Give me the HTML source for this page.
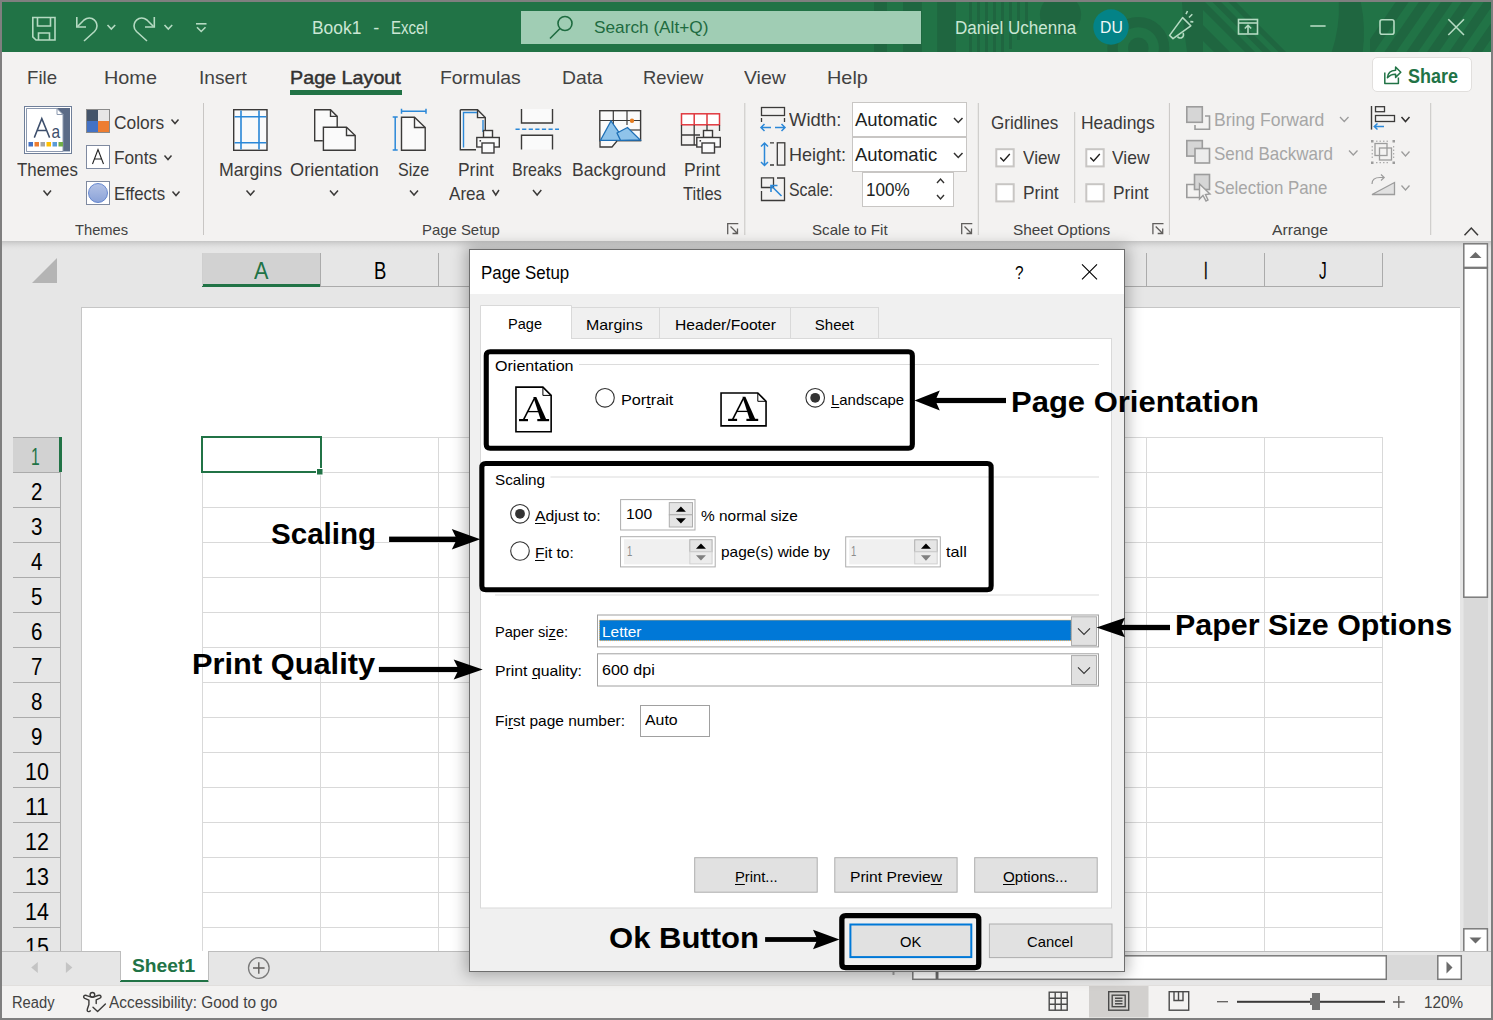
<!DOCTYPE html>
<html><head><meta charset="utf-8"><title>Excel Page Setup</title>
<style>
html,body{margin:0;padding:0;}
body{width:1493px;height:1020px;position:relative;overflow:hidden;background:#7f7f7f;font-family:"Liberation Sans",sans-serif;}
.r{position:absolute;}
.t{position:absolute;white-space:nowrap;line-height:1;transform-origin:0 0;font-family:"Liberation Sans",sans-serif;}
u{text-decoration-thickness:1px;text-underline-offset:2px;}
</style></head><body>
<div class="r" style="left:2px;top:2px;width:1489px;height:50.7px;background:#217346;"></div>
<svg class="r" style="left:0;top:0" width="1493" height="52" viewBox="0 0 1493 52">
<defs><clipPath id="tbc"><rect x="2" y="2" width="1489" height="50"/></clipPath><clipPath id="tbc2"><rect x="1203" y="2" width="120" height="50"/></clipPath><clipPath id="tbc3"><rect x="1370" y="2" width="121" height="50"/></clipPath></defs>
<g clip-path="url(#tbc)" fill="#1f6640">
<rect x="874" y="2" width="13" height="50"/><rect x="903" y="2" width="18.8" height="50"/><rect x="937.2" y="2" width="18.8" height="50"/>
<rect x="969" y="2" width="3" height="50"/><rect x="977" y="2" width="3" height="50"/><rect x="985" y="2" width="3" height="50"/><rect x="993" y="2" width="3" height="50"/><rect x="1001" y="2" width="3" height="50"/><rect x="1009" y="2" width="3" height="47"/><rect x="1017" y="2" width="3" height="38"/><rect x="1025" y="2" width="3" height="24"/>
<circle cx="1060.5" cy="14.7" r="20.6"/>
<path d="M1138.3 47.9 m-31 0 a31 31 0 1 0 62 0 a31 31 0 1 0 -62 0 Z M1138.3 47.9 m-20.6 0 a20.6 20.6 0 1 1 41.2 0 a20.6 20.6 0 1 1 -41.2 0 Z" fill-rule="evenodd"/>
<circle cx="1138.3" cy="47.9" r="10.3"/>
<path d="M1182 2 L1203 2 L1203 52 L1187 52 Q1183 27 1182 2 Z"/>
<g clip-path="url(#tbc2)"><path d="M1164 2 L1180 2 L1230 52 L1214 52 Z"/><path d="M1195 2 L1205 2 L1255 52 L1245 52 Z"/><path d="M1212.5 2 L1221 2 L1271 52 L1262.5 52 Z"/><path d="M1228.5 2 L1236 2 L1286 52 L1278.5 52 Z"/></g>
<path d="M1338.8 2 L1360.8 2 Q1366 27 1362.7 52 L1331.7 52 Q1340 27 1338.8 2 Z"/>
<g clip-path="url(#tbc3)"><path d="M1395.7199999999998 2 L1408.62 2 L1374.12 52 L1361.2199999999998 52 Z"/><path d="M1418.9199999999998 2 L1430.62 2 L1396.12 52 L1384.42 52 Z"/><path d="M1440.9199999999998 2 L1452.52 2 L1418.02 52 L1406.42 52 Z"/><path d="M1461.62 2 L1473.2199999999998 2 L1438.7199999999998 52 L1427.12 52 Z"/><path d="M1483.62 2 L1495.02 2 L1460.52 52 L1449.12 52 Z"/><path d="M1505.62 2 L1516.62 2 L1482.12 52 L1471.12 52 Z"/></g>
</g>
<g fill="none" stroke="#b5dac2" stroke-width="1.6">
<!-- save -->
<path d="M32.8 17.5 H55 V40 H36 L32.8 36.8 Z"/><path d="M37.5 17.5 V26 H50.5 V17.5"/><path d="M38.5 40 V33 H49.5 V40"/>
<!-- undo -->
<path d="M76.8 17 V27 H86"/><path d="M77.5 26.5 L84 20 Q88 17 92 18.5 Q97 21 97 26 Q97 29 94.5 31.5 L84 41"/>
<path d="M107.5 25 L111.3 29 L115.2 25"/>
<!-- redo -->
<path d="M154.3 17 V27 H145"/><path d="M153.5 26.5 L147 20 Q143 17 139 18.5 Q134 21 134 26 Q134 29 136.5 31.5 L147 41"/>
<path d="M164.5 25 L168.3 29 L172.2 25"/>
<!-- customize -->
<path d="M196 23.8 H206.5"/><path d="M197 27.3 L201.2 31.5 L205.5 27.3"/>
<!-- megaphone -->
<path d="M1169.6 35.4 L1182.6 17.6 L1190.8 25.8 L1173 38.6 Z" stroke-linejoin="round"/><path d="M1177.5 36.5 A3.2 3.2 0 1 0 1183 33"/><path d="M1186 14.2 L1187.5 11 M1189 17.5 L1192.3 14.3 M1190.3 21.6 L1193.3 21.9"/>
<!-- ribbon display -->
<rect x="1238.5" y="19.5" width="19" height="14.5"/><path d="M1238.5 23 H1257.5"/><path d="M1248 33.5 V25.5 M1244.8 28.5 L1248 25.3 L1251.2 28.5"/>
<!-- min max close -->
<path d="M1310.3 26 H1325.6"/>
<rect x="1380" y="19.8" width="14" height="14.5" rx="2"/>
<path d="M1448.3 19.3 L1464 35 M1464 19.3 L1448.3 35"/>
</g>
</svg>
<div class="r" style="left:521px;top:11px;width:400px;height:33px;background:#a0cdb4;"></div>
<svg class="r" style="left:540px;top:12px" width="40" height="32"><g fill="none" stroke="#1e6b40" stroke-width="1.6"><circle cx="25" cy="11.5" r="7"/><path d="M20 16.5 L10 26.5"/></g></svg>
<div class="t" style="left:594.00px;top:19.35px;font-size:17px;color:#1e6b40;transform:scaleX(1.0135);">Search (Alt+Q)</div>
<div class="t" style="left:312.10px;top:18.50px;font-size:18px;color:#cbe6d4;transform:scaleX(0.9661);">Book1</div>
<div class="t" style="left:373.30px;top:18.50px;font-size:18px;color:#cbe6d4;">-</div>
<div class="t" style="left:390.80px;top:18.50px;font-size:18px;color:#cbe6d4;transform:scaleX(0.8362);">Excel</div>
<div class="t" style="left:955.20px;top:18.50px;font-size:18px;color:#cbe6d4;transform:scaleX(0.9465);">Daniel Uchenna</div>
<svg class="r" style="left:1090px;top:8px" width="42" height="40"><circle cx="21" cy="19" r="17.7" fill="#038387"/></svg>
<div class="t" style="left:1099.80px;top:18.85px;font-size:17px;color:#f0f8f8;transform:scaleX(0.9281);">DU</div>
<div class="r" style="left:2px;top:52px;width:1489px;height:189px;background:#f3f2f1;"></div>
<div class="t" style="left:26.80px;top:67.55px;font-size:19px;color:#424242;transform:scaleX(0.9807);">File</div>
<div class="t" style="left:103.80px;top:67.55px;font-size:19px;color:#424242;transform:scaleX(1.0447);">Home</div>
<div class="t" style="left:199.30px;top:67.55px;font-size:19px;color:#424242;transform:scaleX(1.0063);">Insert</div>
<div class="t" style="left:440.30px;top:67.55px;font-size:19px;color:#424242;transform:scaleX(1.0198);">Formulas</div>
<div class="t" style="left:561.60px;top:67.55px;font-size:19px;color:#424242;transform:scaleX(1.0178);">Data</div>
<div class="t" style="left:642.60px;top:67.55px;font-size:19px;color:#424242;transform:scaleX(0.9676);">Review</div>
<div class="t" style="left:744.30px;top:67.55px;font-size:19px;color:#424242;transform:scaleX(1.0233);">View</div>
<div class="t" style="left:827.30px;top:67.55px;font-size:19px;color:#424242;transform:scaleX(1.0449);">Help</div>
<div class="t" style="left:290.10px;top:67.55px;font-size:19px;color:#323130;transform:scaleX(1.0386);-webkit-text-stroke:0.45px #323130;">Page Layout</div>
<div class="r" style="left:290px;top:90px;width:112px;height:4.5px;background:#217346;"></div>
<div class="r" style="left:1372.4px;top:57.3px;width:100px;height:35px;background:#ffffff;border:1px solid #e1dfdd;border-radius:5px;box-sizing:border-box;"></div>
<svg class="r" style="left:0;top:0" width="1493" height="100"><g fill="none" stroke="#217346" stroke-width="1.5" stroke-linejoin="round"><path d="M1384.8 72.4 V83.4 H1398.4 V77.6"/><path d="M1387.4 77.8 Q1388 70.6 1395.6 70.3 V67 L1400.8 72.2 L1395.6 77.4 V74.2 Q1390.6 74 1387.4 77.8 Z"/></g></svg>
<div class="t" style="left:1408.20px;top:65.25px;font-size:21px;color:#217346;font-weight:bold;transform:scaleX(0.8547);">Share</div>
<svg class="r" style="left:0;top:0" width="1493" height="245"><rect x="203.0" y="103" width="1" height="132" fill="#c8c6c4"/><rect x="744.3" y="103" width="1" height="132" fill="#c8c6c4"/><rect x="977.8" y="103" width="1" height="132" fill="#c8c6c4"/><rect x="1074.2" y="112" width="1" height="91" fill="#c8c6c4"/><rect x="1168.9" y="103" width="1" height="132" fill="#c8c6c4"/><rect x="1430.2" y="103" width="1" height="132" fill="#c8c6c4"/><rect x="24.5" y="106.5" width="47" height="47" fill="#fff" stroke="#6f7f99" stroke-width="1"/><rect x="26.5" y="108.5" width="43" height="43" fill="#fff" stroke="#b7c3d5" stroke-width="1"/><path d="M57 108 L70 108 L70 151 L58 151 L58 117 Z" fill="#5b6b87"/><path d="M26.5 108.5 H57 L63 114.5 V151.5 H26.5 Z" fill="#fff" stroke="#8d9ab0" stroke-width="1"/><path d="M57 108.5 V114.5 H63" fill="none" stroke="#8d9ab0" stroke-width="1"/><path d="M34.3 137.6 L41.8 118.6 L49.6 137.6 M36.7 130.6 H47.1" fill="none" stroke="#3d4f6c" stroke-width="1.5"/><text x="51.6" y="137.7" font-family="Liberation Sans" font-size="18.5" fill="#3d4f6c" textLength="8.6" lengthAdjust="spacingAndGlyphs">a</text><rect x="28.5" y="142" width="4.5" height="4.5" fill="#4472c4"/><rect x="34.5" y="142" width="4.5" height="4.5" fill="#ed7d31"/><rect x="40.5" y="142" width="4.5" height="4.5" fill="#a5a5a5"/><rect x="46.5" y="142" width="4.5" height="4.5" fill="#ffc000"/><rect x="52.5" y="142" width="4.5" height="4.5" fill="#5b9bd5"/><rect x="58.5" y="142" width="4.5" height="4.5" fill="#70ad47"/><rect x="86.5" y="109.5" width="23" height="23" fill="none" stroke="#8a8a8a"/><rect x="87" y="110" width="11" height="11" fill="#44546a"/><rect x="98" y="110" width="11" height="11" fill="#e7e6e6"/><rect x="87" y="121" width="11" height="11" fill="#4472c4"/><rect x="98" y="121" width="11" height="11" fill="#ed7d31"/><rect x="86.5" y="145.5" width="23" height="23" fill="#fff" stroke="#7f8aa0"/><path d="M92.5 164 L98 149.5 L103.5 164 M94.5 159 H101.5" fill="none" stroke="#222" stroke-width="1.1"/><rect x="86.5" y="181.5" width="23" height="23" fill="#fff" stroke="#7f8aa0"/><defs><linearGradient id="efg" x1="0" y1="0" x2="0" y2="1"><stop offset="0" stop-color="#b4c3e6"/><stop offset="1" stop-color="#8aa2d8"/></linearGradient></defs><circle cx="98" cy="193" r="9.5" fill="url(#efg)" stroke="#5a7fcc" stroke-width="0.9"/><path d="M43.5 190.5 L47.25 195 L51 190.5" fill="none" stroke="#3b3a39" stroke-width="1.5"/><path d="M171.5 119.5 L175.0 123.5 L178.5 119.5" fill="none" stroke="#3b3a39" stroke-width="1.5"/><path d="M164.5 155.5 L168.0 159.5 L171.5 155.5" fill="none" stroke="#3b3a39" stroke-width="1.5"/><path d="M172.5 191.5 L176.0 195.5 L179.5 191.5" fill="none" stroke="#3b3a39" stroke-width="1.5"/><rect x="233.7" y="109.7" width="33.3" height="40.6" fill="#fafafa" stroke="#3b3a39" stroke-width="1.4"/><g stroke="#2b88d8" stroke-width="1.6"><path d="M241 110.5 V149.5 M259 110.5 V149.5 M234.5 116.8 H266.3 M234.5 142.7 H266.3"/></g><path d="M246.5 190.5 L250.5 195 L254.5 190.5" fill="none" stroke="#3b3a39" stroke-width="1.5"/><path d="M314.7 109.7 H330.5 L337.2 116.4 V127 H323.4 V140.8 H314.7 Z" fill="#fafafa"/><path d="M322.8 140.8 H314.7 V109.7 H330.5 L337.2 116.4 V127" fill="none" stroke="#3b3a39" stroke-width="1.4"/><path d="M330.5 109.7 V116.4 H337.2" fill="none" stroke="#3b3a39" stroke-width="1.4"/><path d="M323.4 127.3 H346.5 L355.2 135.5 V150.3 H323.4 Z" fill="#fafafa" stroke="#3b3a39" stroke-width="1.4"/><path d="M346.5 127.3 V135.5 H355.2" fill="none" stroke="#3b3a39" stroke-width="1.4"/><path d="M330 190.5 L334.0 195 L338 190.5" fill="none" stroke="#3b3a39" stroke-width="1.5"/><path d="M401.5 117.2 H414.5 L425.2 127.5 V150.3 H401.5 Z" fill="#fafafa" stroke="#3b3a39" stroke-width="1.4"/><path d="M414.5 117.2 V127.5 H425.2" fill="none" stroke="#3b3a39" stroke-width="1.4"/><g stroke="#2b88d8" stroke-width="1.5" fill="none"><path d="M401.5 111.3 H426 M401.5 108.8 V113.8 M426 108.8 V113.8"/><path d="M395.2 117 V150 M392.7 117 H397.7 M392.7 150 H397.7"/></g><path d="M410 190.5 L414.0 195 L418 190.5" fill="none" stroke="#3b3a39" stroke-width="1.5"/><path d="M460.3 109.8 H477.5 L485.3 117.6 V132" fill="none" stroke="#3b3a39" stroke-width="1.4"/><path d="M460.3 109.8 V149.8 H476" fill="none" stroke="#3b3a39" stroke-width="1.4"/><path d="M477.5 109.8 V117.6 H485.3" fill="none" stroke="#3b3a39" stroke-width="1.4"/><path d="M463.5 147.5 V112.5 H477 M483 120 V132" fill="none" stroke="#2b88d8" stroke-width="1.4"/><g fill="#fafafa" stroke="#3b3a39" stroke-width="1.4"><rect x="483.5" y="130.5" width="9" height="7"/><rect x="476.8" y="137.5" width="22.5" height="9.5"/><rect x="482" y="143" width="12" height="10"/></g><rect x="479.5" y="140" width="1.6" height="1.6" fill="#3b3a39"/><path d="M492.5 190 L495.75 195 L499 190" fill="none" stroke="#3b3a39" stroke-width="1.5"/><path d="M521.5 109 V123 H552.5 V109" fill="#fafafa" stroke="#3b3a39" stroke-width="1.4"/><path d="M521.5 149.5 V135.2 H552.5 V149.5" fill="#fafafa" stroke="#3b3a39" stroke-width="1.4"/><path d="M515.5 129.2 H559" stroke="#2b88d8" stroke-width="1.5" stroke-dasharray="4.2 2.4"/><path d="M533 190 L537.15 195 L541.3 190" fill="none" stroke="#3b3a39" stroke-width="1.5"/><rect x="599.8" y="110.7" width="40.8" height="30" fill="#fafafa" stroke="#3b3a39" stroke-width="1.4"/><g stroke="#3b3a39" stroke-width="1.2"><path d="M613.3 111 V130 M627 111 V125 M600 120.5 H640"/><path d="M627 130 H640.5"/></g><path d="M600.5 140.3 L611 121 L624.5 140.3 Z" fill="#8fc3ea" stroke="#1e6fb6" stroke-width="1.3"/><path d="M617 133 L627.5 127.5 L640.3 140 L620.5 140.3 Z" fill="#8fc3ea" stroke="#1e6fb6" stroke-width="1.3"/><circle cx="632" cy="120.7" r="2.2" fill="#e47b1f"/><path d="M600 141 V147 H612 L617 141" fill="#fafafa" stroke="#3b3a39" stroke-width="1.3"/><rect x="681.5" y="113.8" width="38" height="11" fill="#fff" stroke="#e0383e" stroke-width="1.5"/><path d="M694.2 114 V125 M707 114 V125" stroke="#e0383e" stroke-width="1.5"/><path d="M681.5 125 V145 H700 M681.5 135 H700 M694.2 125 V145 M707 125 V132 M719.5 125 V131" fill="none" stroke="#3b3a39" stroke-width="1.3"/><g fill="#fafafa" stroke="#3b3a39" stroke-width="1.4"><rect x="703.5" y="130.5" width="9" height="7"/><rect x="696.8" y="137.5" width="23.5" height="9.5"/><rect x="702" y="143" width="12.5" height="10"/></g><rect x="699.5" y="140" width="1.6" height="1.6" fill="#3b3a39"/><g fill="none" stroke="#605e5c" stroke-width="1.3"><path d="M727.7 234.3 V223.7 H738.3"/><path d="M730.5 226.5 L737.5 233.5 M737.5 228.5 V233.5 H732.5"/></g><g fill="none" stroke="#3b3a39" stroke-width="1.3"><rect x="761.5" y="107.5" width="23" height="8"/><path d="M761.5 118 V122 M784.5 118 V122"/></g><g fill="none" stroke="#2b88d8" stroke-width="1.5"><path d="M761 127.5 H771 M764.5 124 L761 127.5 L764.5 131 M775 127.5 H785 M781.5 124 L785 127.5 L781.5 131"/></g><g fill="none" stroke="#3b3a39" stroke-width="1.3"><rect x="777.3" y="142.8" width="7.5" height="22.3"/><path d="M770 142.8 H774 M770 165 H774"/></g><g fill="none" stroke="#2b88d8" stroke-width="1.5"><path d="M764.5 143 V154 M761 146.5 L764.5 143 L768 146.5 M764.5 154 V165.5 M761 162 L764.5 165.5 L768 162"/></g><g fill="none" stroke="#3b3a39" stroke-width="1.3"><path d="M761.5 177.8 H773.5 V187.5 H761.5 Z" fill="none"/><path d="M777 178 H784.5 V200.5 H761.5 V191"/></g><path d="M781.5 196 L771.5 186 M771 192 V185.5 H777.5" fill="none" stroke="#2b88d8" stroke-width="1.6"/><rect x="852.5" y="102.5" width="114" height="34" fill="#fff" stroke="#c8c6c4"/><rect x="852.5" y="137.5" width="114" height="34" fill="#fff" stroke="#c8c6c4"/><rect x="862.5" y="172.5" width="91" height="34" fill="#fff" stroke="#c8c6c4"/><path d="M954 118 L958.25 122.5 L962.5 118" fill="none" stroke="#323130" stroke-width="1.5"/><path d="M954 153 L958.25 157.5 L962.5 153" fill="none" stroke="#323130" stroke-width="1.5"/><path d="M937 183 L940.5 179 L944 183 M937 195 L940.5 199 L944 195" fill="none" stroke="#323130" stroke-width="1.4"/><g fill="none" stroke="#605e5c" stroke-width="1.3"><path d="M961.7 234.3 V223.7 H972.3"/><path d="M964.5 226.5 L971.5 233.5 M971.5 228.5 V233.5 H966.5"/></g><rect x="996.3" y="149.2" width="17.4" height="17.2" fill="#fff" stroke="#c8c6c4" stroke-width="2"/><path d="M1000.3 157.5 L1003.5999999999999 161 L1009.8 154" fill="none" stroke="#201f1e" stroke-width="1.4"/><rect x="996.3" y="184.2" width="17.4" height="17.2" fill="#fff" stroke="#c8c6c4" stroke-width="2"/><rect x="1086.3" y="149.2" width="17.4" height="17.2" fill="#fff" stroke="#c8c6c4" stroke-width="2"/><path d="M1090.3 157.5 L1093.6 161 L1099.8 154" fill="none" stroke="#201f1e" stroke-width="1.4"/><rect x="1086.3" y="184.2" width="17.4" height="17.2" fill="#fff" stroke="#c8c6c4" stroke-width="2"/><g fill="none" stroke="#605e5c" stroke-width="1.3"><path d="M1152.9 234.3 V223.7 H1163.5"/><path d="M1155.7 226.5 L1162.7 233.5 M1162.7 228.5 V233.5 H1157.7"/></g><rect x="1186.8" y="106.8" width="15.5" height="15.5" fill="#d6d6d6" stroke="#9c9c9c" stroke-width="1.6"/><path d="M1205 116 H1209.5 V129.3 H1195 V125" fill="none" stroke="#9c9c9c" stroke-width="1.6"/><rect x="1186.8" y="140.6" width="15.5" height="15.5" fill="#d6d6d6" stroke="#9c9c9c" stroke-width="1.6"/><rect x="1195" y="148.5" width="14.5" height="14.5" fill="#ececec" stroke="#9c9c9c" stroke-width="1.6"/><rect x="1194.5" y="174.5" width="15" height="15" fill="#d6d6d6" stroke="#9c9c9c" stroke-width="1.6"/><path d="M1194 184.5 H1186.8 V197.5 H1199" fill="none" stroke="#9c9c9c" stroke-width="1.6"/><path d="M1199.5 184 V199 L1203 195.5 L1206 201 L1208 200 L1205.5 194.5 L1210 194 Z" fill="#f3f2f1" stroke="#9c9c9c" stroke-width="1.4"/><path d="M1340 117 L1344.25 121.5 L1348.5 117" fill="none" stroke="#9c9c9c" stroke-width="1.3"/><path d="M1349 150.5 L1353.25 155 L1357.5 150.5" fill="none" stroke="#9c9c9c" stroke-width="1.3"/><path d="M1371.5 106 V129.6" stroke="#3b3a39" stroke-width="1.4"/><g fill="none" stroke="#3b3a39" stroke-width="1.3"><rect x="1375.5" y="106.7" width="9" height="5"/><rect x="1375.5" y="115.5" width="19" height="6"/></g><path d="M1374 126.5 H1384 M1377.5 123.5 L1374.3 126.5 L1377.5 129.5" fill="none" stroke="#2b88d8" stroke-width="1.5"/><path d="M1401.5 117 L1405.5 121.5 L1409.5 117" fill="none" stroke="#323130" stroke-width="1.5"/><g fill="none" stroke="#9c9c9c" stroke-width="1.3"><rect x="1375" y="143.5" width="12" height="12"/><rect x="1379.5" y="148" width="12" height="12"/></g><g fill="#9c9c9c"><rect x="1371" y="140" width="2.5" height="2.5"/><rect x="1392.5" y="140" width="2.5" height="2.5"/><rect x="1371" y="161.5" width="2.5" height="2.5"/><rect x="1392.5" y="161.5" width="2.5" height="2.5"/></g><path d="M1372.2 146 V158 M1393.7 146 V158 M1376 141.2 H1390 M1376 162.7 H1390" stroke="#9c9c9c" stroke-width="1" stroke-dasharray="1.5 2"/><path d="M1401.5 151.5 L1405.5 156 L1409.5 151.5" fill="none" stroke="#9c9c9c" stroke-width="1.3"/><path d="M1372 194.5 L1394.5 182.5 V194.5 Z" fill="#e1e1e1" stroke="#9c9c9c" stroke-width="1.3"/><path d="M1372 184 Q1372 177.5 1380 177.5 H1384 M1381 174.5 L1384.2 177.5 L1381 180.5" fill="none" stroke="#9c9c9c" stroke-width="1.2"/><path d="M1401.5 185.5 L1405.5 190 L1409.5 185.5" fill="none" stroke="#9c9c9c" stroke-width="1.3"/><path d="M1464.5 235.3 L1471.3 228 L1478 235.3" fill="none" stroke="#3b3a39" stroke-width="1.5"/></svg>
<div class="t" style="left:16.50px;top:160.68px;font-size:18.5px;color:#3b3a39;transform:scaleX(0.9104);">Themes</div>
<div class="t" style="left:114.00px;top:113.58px;font-size:18.5px;color:#3b3a39;transform:scaleX(0.9371);">Colors</div>
<div class="t" style="left:114.00px;top:149.18px;font-size:18.5px;color:#3b3a39;transform:scaleX(0.9319);">Fonts</div>
<div class="t" style="left:114.00px;top:185.18px;font-size:18.5px;color:#3b3a39;transform:scaleX(0.9086);">Effects</div>
<div class="t" style="left:219.10px;top:161.28px;font-size:18.5px;color:#3b3a39;transform:scaleX(0.9579);">Margins</div>
<div class="t" style="left:289.70px;top:161.28px;font-size:18.5px;color:#3b3a39;transform:scaleX(0.9816);">Orientation</div>
<div class="t" style="left:397.80px;top:161.28px;font-size:18.5px;color:#3b3a39;transform:scaleX(0.8699);">Size</div>
<div class="t" style="left:458.30px;top:160.88px;font-size:18.5px;color:#3b3a39;transform:scaleX(0.9417);">Print</div>
<div class="t" style="left:448.60px;top:184.78px;font-size:18.5px;color:#3b3a39;transform:scaleX(0.9226);">Area</div>
<div class="t" style="left:512.30px;top:160.88px;font-size:18.5px;color:#3b3a39;transform:scaleX(0.8656);">Breaks</div>
<div class="t" style="left:572.20px;top:160.88px;font-size:18.5px;color:#3b3a39;transform:scaleX(0.9514);">Background</div>
<div class="t" style="left:683.90px;top:160.88px;font-size:18.5px;color:#3b3a39;transform:scaleX(0.9496);">Print</div>
<div class="t" style="left:682.70px;top:184.78px;font-size:18.5px;color:#3b3a39;transform:scaleX(0.8925);">Titles</div>
<div class="t" style="left:788.50px;top:110.98px;font-size:18.5px;color:#3b3a39;transform:scaleX(0.9972);">Width:</div>
<div class="t" style="left:788.50px;top:146.08px;font-size:18.5px;color:#3b3a39;transform:scaleX(0.9737);">Height:</div>
<div class="t" style="left:788.50px;top:181.08px;font-size:18.5px;color:#3b3a39;transform:scaleX(0.8594);">Scale:</div>
<div class="t" style="left:990.80px;top:113.88px;font-size:18.5px;color:#3b3a39;transform:scaleX(0.9221);">Gridlines</div>
<div class="t" style="left:1081.30px;top:113.88px;font-size:18.5px;color:#3b3a39;transform:scaleX(0.9442);">Headings</div>
<div class="t" style="left:1022.80px;top:149.08px;font-size:18.5px;color:#3b3a39;transform:scaleX(0.9277);">View</div>
<div class="t" style="left:1023.30px;top:184.48px;font-size:18.5px;color:#3b3a39;transform:scaleX(0.9364);">Print</div>
<div class="t" style="left:1112.30px;top:149.08px;font-size:18.5px;color:#3b3a39;transform:scaleX(0.9428);">View</div>
<div class="t" style="left:1113.30px;top:184.48px;font-size:18.5px;color:#3b3a39;transform:scaleX(0.9364);">Print</div>
<div class="t" style="left:854.90px;top:111.28px;font-size:18.5px;color:#201f1e;">Automatic</div>
<div class="t" style="left:854.90px;top:146.08px;font-size:18.5px;color:#201f1e;">Automatic</div>
<div class="t" style="left:865.70px;top:181.28px;font-size:18.5px;color:#201f1e;transform:scaleX(0.9227);">100%</div>
<div class="t" style="left:1213.70px;top:110.78px;font-size:18.5px;color:#a6a6a6;transform:scaleX(0.9502);">Bring Forward</div>
<div class="t" style="left:1213.70px;top:144.97px;font-size:18.5px;color:#a6a6a6;transform:scaleX(0.9190);">Send Backward</div>
<div class="t" style="left:1213.70px;top:178.88px;font-size:18.5px;color:#a6a6a6;transform:scaleX(0.9107);">Selection Pane</div>
<div class="t" style="left:75.00px;top:222.15px;font-size:15px;color:#424242;transform:scaleX(0.9806);">Themes</div>
<div class="t" style="left:422.30px;top:222.15px;font-size:15px;color:#424242;transform:scaleX(0.9927);">Page Setup</div>
<div class="t" style="left:811.80px;top:222.15px;font-size:15px;color:#424242;transform:scaleX(1.0080);">Scale to Fit</div>
<div class="t" style="left:1012.80px;top:222.15px;font-size:15px;color:#424242;transform:scaleX(1.0231);">Sheet Options</div>
<div class="t" style="left:1272.10px;top:222.15px;font-size:15px;color:#424242;transform:scaleX(1.0487);">Arrange</div>
<svg class="r" style="left:0;top:0" width="1493" height="1020"><rect x="2" y="241" width="1489" height="710" fill="#e6e6e6"/><rect x="81" y="307" width="1379" height="644" fill="#fff"/><rect x="81" y="307" width="1379" height="1" fill="#c6c6c6"/><rect x="81" y="307" width="1" height="644" fill="#c6c6c6"/><defs><linearGradient id="rsh" x1="0" y1="0" x2="0" y2="1"><stop offset="0" stop-color="#c4c4c4"/><stop offset="1" stop-color="#e6e6e6" stop-opacity="0"/></linearGradient></defs><path d="M57 258 V283 H32 Z" fill="#b4b4b4"/><rect x="202" y="253" width="118" height="34" fill="#d2d2d2"/><rect x="320" y="286" width="1063" height="1" fill="#ababab"/><rect x="202" y="284" width="118" height="3" fill="#217346"/><rect x="320" y="253" width="1" height="33" fill="#ababab"/><rect x="438" y="253" width="1" height="33" fill="#ababab"/><rect x="556" y="253" width="1" height="33" fill="#ababab"/><rect x="674" y="253" width="1" height="33" fill="#ababab"/><rect x="792" y="253" width="1" height="33" fill="#ababab"/><rect x="910" y="253" width="1" height="33" fill="#ababab"/><rect x="1028" y="253" width="1" height="33" fill="#ababab"/><rect x="1146" y="253" width="1" height="33" fill="#ababab"/><rect x="1264" y="253" width="1" height="33" fill="#ababab"/><rect x="1382" y="253" width="1" height="33" fill="#ababab"/><rect x="202" y="253" width="1" height="33" fill="#cfcfcf"/><rect x="13" y="437" width="48" height="35" fill="#d2d2d2"/><rect x="13" y="437" width="48" height="1" fill="#ababab"/><rect x="13" y="472" width="47" height="1" fill="#ababab"/><rect x="13" y="507" width="47" height="1" fill="#ababab"/><rect x="13" y="542" width="47" height="1" fill="#ababab"/><rect x="13" y="577" width="47" height="1" fill="#ababab"/><rect x="13" y="612" width="47" height="1" fill="#ababab"/><rect x="13" y="647" width="47" height="1" fill="#ababab"/><rect x="13" y="682" width="47" height="1" fill="#ababab"/><rect x="13" y="717" width="47" height="1" fill="#ababab"/><rect x="13" y="752" width="47" height="1" fill="#ababab"/><rect x="13" y="787" width="47" height="1" fill="#ababab"/><rect x="13" y="822" width="47" height="1" fill="#ababab"/><rect x="13" y="857" width="47" height="1" fill="#ababab"/><rect x="13" y="892" width="47" height="1" fill="#ababab"/><rect x="13" y="927" width="47" height="1" fill="#ababab"/><rect x="60" y="472" width="1" height="479" fill="#ababab"/><rect x="59" y="437" width="3" height="35" fill="#217346"/><rect x="202" y="437" width="1" height="514" fill="#d9d9d9"/><rect x="320" y="437" width="1" height="514" fill="#d9d9d9"/><rect x="438" y="437" width="1" height="514" fill="#d9d9d9"/><rect x="556" y="437" width="1" height="514" fill="#d9d9d9"/><rect x="674" y="437" width="1" height="514" fill="#d9d9d9"/><rect x="792" y="437" width="1" height="514" fill="#d9d9d9"/><rect x="910" y="437" width="1" height="514" fill="#d9d9d9"/><rect x="1028" y="437" width="1" height="514" fill="#d9d9d9"/><rect x="1146" y="437" width="1" height="514" fill="#d9d9d9"/><rect x="1264" y="437" width="1" height="514" fill="#d9d9d9"/><rect x="1382" y="437" width="1" height="514" fill="#d9d9d9"/><rect x="202" y="437" width="1181" height="1" fill="#d9d9d9"/><rect x="202" y="472" width="1181" height="1" fill="#d9d9d9"/><rect x="202" y="507" width="1181" height="1" fill="#d9d9d9"/><rect x="202" y="542" width="1181" height="1" fill="#d9d9d9"/><rect x="202" y="577" width="1181" height="1" fill="#d9d9d9"/><rect x="202" y="612" width="1181" height="1" fill="#d9d9d9"/><rect x="202" y="647" width="1181" height="1" fill="#d9d9d9"/><rect x="202" y="682" width="1181" height="1" fill="#d9d9d9"/><rect x="202" y="717" width="1181" height="1" fill="#d9d9d9"/><rect x="202" y="752" width="1181" height="1" fill="#d9d9d9"/><rect x="202" y="787" width="1181" height="1" fill="#d9d9d9"/><rect x="202" y="822" width="1181" height="1" fill="#d9d9d9"/><rect x="202" y="857" width="1181" height="1" fill="#d9d9d9"/><rect x="202" y="892" width="1181" height="1" fill="#d9d9d9"/><rect x="202" y="927" width="1181" height="1" fill="#d9d9d9"/><rect x="202" y="437" width="119" height="35" fill="none" stroke="#217346" stroke-width="2"/><rect x="316.5" y="468.5" width="6.5" height="6.5" fill="#217346" stroke="#fff" stroke-width="1"/><rect x="1460" y="241" width="31" height="710" fill="#e6e6e6"/><rect x="2" y="241" width="1489" height="10" fill="url(#rsh)"/><rect x="1463.5" y="597" width="24.5" height="331" fill="#d9d9d9"/><rect x="1463.8" y="243.8" width="23.6" height="23.6" fill="#fff" stroke="#7a7a7a" stroke-width="1.5"/><path d="M1469.5 258 L1475.5 252 L1481.5 258 Z" fill="#6b6b6b"/><rect x="1463.8" y="268.2" width="23.6" height="329" fill="#fff" stroke="#7a7a7a" stroke-width="1.5"/><rect x="1463.8" y="928.8" width="23.6" height="23" fill="#fff" stroke="#7a7a7a" stroke-width="1.5"/><path d="M1469.5 937.5 L1475.5 943.5 L1481.5 937.5 Z" fill="#6b6b6b"/></svg>
<div class="t" style="left:254.00px;top:258.80px;font-size:24px;color:#217346;transform:scaleX(0.9017);">A</div>
<div class="t" style="left:373.80px;top:258.80px;font-size:24px;color:#000;transform:scaleX(0.7707);">B</div>
<div class="t" style="left:1203.70px;top:258.80px;font-size:24px;color:#000;transform:scaleX(0.5357);-webkit-text-stroke:0.5px #000;">I</div>
<div class="t" style="left:1318.90px;top:258.80px;font-size:24px;color:#000;transform:scaleX(0.6417);">J</div>
<div class="t" style="left:31.10px;top:444.80px;font-size:24px;color:#217346;transform:scaleX(0.6532);">1</div>
<div class="t" style="left:30.60px;top:479.80px;font-size:24px;color:#000;transform:scaleX(0.8559);">2</div>
<div class="t" style="left:30.60px;top:514.80px;font-size:24px;color:#000;transform:scaleX(0.8559);">3</div>
<div class="t" style="left:30.60px;top:549.80px;font-size:24px;color:#000;transform:scaleX(0.8559);">4</div>
<div class="t" style="left:30.60px;top:584.80px;font-size:24px;color:#000;transform:scaleX(0.8559);">5</div>
<div class="t" style="left:30.60px;top:619.80px;font-size:24px;color:#000;transform:scaleX(0.8559);">6</div>
<div class="t" style="left:30.60px;top:654.80px;font-size:24px;color:#000;transform:scaleX(0.8559);">7</div>
<div class="t" style="left:30.60px;top:689.80px;font-size:24px;color:#000;transform:scaleX(0.8559);">8</div>
<div class="t" style="left:30.60px;top:724.80px;font-size:24px;color:#000;transform:scaleX(0.8559);">9</div>
<div class="t" style="left:25.30px;top:759.80px;font-size:24px;color:#000;transform:scaleX(0.8934);">10</div>
<div class="t" style="left:25.30px;top:794.80px;font-size:24px;color:#000;transform:scaleX(0.9535);">11</div>
<div class="t" style="left:25.30px;top:829.80px;font-size:24px;color:#000;transform:scaleX(0.8934);">12</div>
<div class="t" style="left:25.30px;top:864.80px;font-size:24px;color:#000;transform:scaleX(0.8934);">13</div>
<div class="t" style="left:25.30px;top:899.80px;font-size:24px;color:#000;transform:scaleX(0.8934);">14</div>
<div class="t" style="left:25.30px;top:934.80px;font-size:24px;color:#000;transform:scaleX(0.8934);">15</div>
<svg class="r" style="left:0;top:0" width="1493" height="1020"><rect x="2" y="951" width="1489" height="34" fill="#e6e6e6"/><rect x="2" y="951" width="1489" height="1" fill="#bdbdbd"/><rect x="120" y="951" width="88.5" height="30" fill="#fff"/><rect x="120" y="980" width="88.5" height="2" fill="#217346"/><rect x="120" y="951" width="1" height="30" fill="#bdbdbd"/><rect x="208" y="951" width="1" height="30" fill="#bdbdbd"/><path d="M37.8 962 V973 L31.2 967.5 Z" fill="#c4c4c4"/><path d="M65.9 962 V973 L72.4 967.5 Z" fill="#c4c4c4"/><circle cx="258.8" cy="968" r="10.3" fill="none" stroke="#7a7a7a" stroke-width="1.3"/><path d="M253 968 H264.6 M258.8 962.2 V973.8" stroke="#605e5c" stroke-width="1.4"/><rect x="912.8" y="955.8" width="23.5" height="23.5" fill="#fff" stroke="#7a7a7a" stroke-width="1.5"/><rect x="937.8" y="955.8" width="448.5" height="23.5" fill="#fff" stroke="#7a7a7a" stroke-width="1.5"/><rect x="936" y="956" width="2" height="23" fill="#6a6a6a"/><rect x="892.5" y="971" width="2" height="4" fill="#9a9a9a"/><rect x="1387" y="955" width="50" height="25" fill="#d9d9d9"/><rect x="1437.8" y="955.8" width="23.5" height="23.5" fill="#fff" stroke="#7a7a7a" stroke-width="1.5"/><path d="M1446.5 961.5 L1452.5 967.5 L1446.5 973.5 Z" fill="#6b6b6b"/><rect x="2" y="985" width="1489" height="33" fill="#f3f2f1"/><rect x="2" y="985" width="1489" height="1" fill="#e1dfdd"/><rect x="1089" y="986" width="59.5" height="31.5" fill="#d2d0ce"/><g fill="none" stroke="#4a4a4a" stroke-width="1.4"><rect x="1049.2" y="992.2" width="18" height="18"/><path d="M1055.2 992.2 V1010.2 M1061.2 992.2 V1010.2 M1049.2 998.2 H1067.2 M1049.2 1004.2 H1067.2"/></g><g fill="none" stroke="#4a4a4a" stroke-width="1.4"><rect x="1108.7" y="991.7" width="20" height="18.5"/><rect x="1112.2" y="995.2" width="13" height="11.5"/><path d="M1115 998.3 H1122.5 M1115 1001 H1122.5 M1115 1003.7 H1122.5"/></g><g fill="none" stroke="#4a4a4a" stroke-width="1.4"><rect x="1169.2" y="991.7" width="19.5" height="18.5"/><path d="M1174 991.7 V1000.5 H1183 V991.7 M1178.5 991.7 V1000.5"/></g><path d="M1217 1001.7 H1228" stroke="#605e5c" stroke-width="1.3"/><rect x="1237" y="1000.8" width="148" height="2" fill="#3b3a39"/><rect x="1312" y="993" width="8" height="17" fill="#737373"/><rect x="1310" y="998" width="2" height="7" fill="#737373"/><path d="M1393 1002 H1404.7 M1398.8 996 V1008" stroke="#605e5c" stroke-width="1.3"/><g fill="none" stroke="#3b3a39" stroke-width="1.4" stroke-linecap="round" stroke-linejoin="round"><circle cx="92.4" cy="994.8" r="2.3"/><path d="M88.9 1000.1 L84.8 998.4 Q83 997.3 84 995.8 Q85.2 994.8 87.5 995.8 L89.8 996.7 Q92.4 997.7 95 996.7 L97.8 995.5 Q100.2 994.7 101 996.3 Q101.3 997.7 99.5 998.4 L96.2 999.8 V1003.6 M88.9 1000.1 V1004.5 L87.3 1009.3 Q86.8 1011.9 89 1011.6 L90.4 1010.9"/><path d="M93 1007.2 L97.6 1011.6 L105.4 1003.9"/></g></svg>
<div class="t" style="left:131.90px;top:956.35px;font-size:19px;color:#217346;font-weight:bold;transform:scaleX(1.0125);">Sheet1</div>
<div class="t" style="left:11.80px;top:994.90px;font-size:16px;color:#424242;transform:scaleX(0.9191);">Ready</div>
<div class="t" style="left:109.40px;top:994.90px;font-size:16px;color:#424242;transform:scaleX(0.9612);">Accessibility: Good to go</div>
<div class="t" style="left:1423.80px;top:995.40px;font-size:16px;color:#424242;transform:scaleX(0.9521);">120%</div>
<div class="r" style="left:469px;top:249px;width:656px;height:723px;box-shadow:0 0 14px 3px rgba(0,0,0,0.28);"></div>
<svg class="r" style="left:0;top:0" width="1493" height="1020"><rect x="469.5" y="249.5" width="655" height="722" fill="#f0f0f0" stroke="#6e6e6e" stroke-width="1"/><rect x="470" y="250" width="654" height="44" fill="#fff"/><path d="M1082 264.3 L1097 279.3 M1097 264.3 L1082 279.3" stroke="#000" stroke-width="1.1"/><rect x="571.5" y="307.5" width="88" height="31" fill="#f0f0f0" stroke="#d9d9d9" stroke-width="1"/><rect x="659.5" y="307.5" width="131" height="31" fill="#f0f0f0" stroke="#d9d9d9" stroke-width="1"/><rect x="790.5" y="307.5" width="88" height="31" fill="#f0f0f0" stroke="#d9d9d9" stroke-width="1"/><rect x="480.5" y="338.5" width="631" height="569.5" fill="#fff" stroke="#d9d9d9" stroke-width="1"/><path d="M480.5 339 V305.5 H571.5 V339" fill="#fff" stroke="#d9d9d9" stroke-width="1"/><rect x="481" y="306" width="90" height="34" fill="#fff"/><rect x="579" y="364" width="520" height="1" fill="#dcdcdc"/><rect x="550.4" y="476.5" width="548.6" height="1" fill="#dcdcdc"/><rect x="495" y="594.5" width="604" height="1" fill="#dcdcdc"/><path d="M515.95 387.15 H542.9 L551.15 395.4 V431.75 H515.95 Z" fill="#fff" stroke="#000" stroke-width="1.6"/><path d="M542.9 387.15 V395.4 H551.15" fill="none" stroke="#000" stroke-width="1"/><path d="M721.05 393.05 H757.8 L766.05 401.3 V425.85 H721.05 Z" fill="#fff" stroke="#000" stroke-width="1.6"/><path d="M757.8 393.05 V401.3 H766.05" fill="none" stroke="#000" stroke-width="1"/><path d="M533.3 397 H536.3 L546.3 419.6 H540.6 Z" fill="#000"/><path d="M534.3 398.5 L523.6 419.6" stroke="#000" stroke-width="1.6"/><path d="M527.3 411.6 H541.8" stroke="#000" stroke-width="1.3"/><rect x="519" y="419" width="9" height="2.2" fill="#000"/><rect x="537.3" y="419" width="11.8" height="2.2" fill="#000"/><g transform="translate(209.1,-0.2)"><path d="M533.3 397 H536.3 L546.3 419.6 H540.6 Z" fill="#000"/><path d="M534.3 398.5 L523.6 419.6" stroke="#000" stroke-width="1.6"/><path d="M527.3 411.6 H541.8" stroke="#000" stroke-width="1.3"/><rect x="519" y="419" width="9" height="2.2" fill="#000"/><rect x="537.3" y="419" width="11.8" height="2.2" fill="#000"/></g><circle cx="605" cy="397.8" r="9.3" fill="#fff" stroke="#333" stroke-width="1.1"/><circle cx="815.2" cy="397.8" r="9.3" fill="#fff" stroke="#333" stroke-width="1.1"/><circle cx="815.2" cy="397.8" r="4.9" fill="#333"/><circle cx="520" cy="513.8" r="9.3" fill="#fff" stroke="#333" stroke-width="1.1"/><circle cx="520" cy="513.8" r="4.9" fill="#333"/><circle cx="520" cy="551" r="9.3" fill="#fff" stroke="#333" stroke-width="1.1"/><rect x="620.6" y="499.6" width="74.39999999999998" height="30.399999999999977" fill="#fff" stroke="#adadad" stroke-width="1"/><rect x="669.3" y="502.6" width="23.200000000000045" height="12.199999999999932" fill="#e5e5e5" stroke="#adadad" stroke-width="1"/><rect x="669.3" y="514.8" width="23.200000000000045" height="12.200000000000045" fill="#e5e5e5" stroke="#adadad" stroke-width="1"/><path d="M675.9 511.79999999999995 L680.9 506.49999999999994 L685.9 511.79999999999995 Z" fill="#000"/><path d="M675.9 518.3 L680.9 523.5999999999999 L685.9 518.3 Z" fill="#000"/><rect x="620.5" y="536.7" width="94.70000000000005" height="30.199999999999932" fill="#fff" stroke="#adadad" stroke-width="1"/><rect x="624" y="539.2" width="65.29999999999995" height="25.199999999999932" fill="#f0f0f0"/><rect x="689.8" y="539.7" width="22.300000000000068" height="12.099999999999909" fill="#e5e5e5" stroke="#adadad" stroke-width="1"/><rect x="689.8" y="551.8" width="22.300000000000068" height="12.100000000000023" fill="#ececec" stroke="#d0d0d0" stroke-width="1"/><path d="M695.95 548.8 L700.95 543.5 L705.95 548.8 Z" fill="#000"/><path d="M695.95 555.3 L700.95 560.5999999999999 L705.95 555.3 Z" fill="#808080"/><rect x="845.7" y="536.8" width="94.59999999999991" height="30.100000000000023" fill="#fff" stroke="#adadad" stroke-width="1"/><rect x="849.2" y="539.3" width="65.0" height="25.100000000000023" fill="#f0f0f0"/><rect x="914.7" y="539.8" width="22.5" height="12.049999999999955" fill="#e5e5e5" stroke="#adadad" stroke-width="1"/><rect x="914.7" y="551.8499999999999" width="22.5" height="12.050000000000068" fill="#ececec" stroke="#d0d0d0" stroke-width="1"/><path d="M920.95 548.8499999999999 L925.95 543.55 L930.95 548.8499999999999 Z" fill="#000"/><path d="M920.95 555.3499999999999 L925.95 560.6499999999999 L930.95 555.3499999999999 Z" fill="#808080"/><rect x="597.5" y="615.0" width="501" height="31.899999999999977" fill="#fff" stroke="#a0a0a0" stroke-width="1"/><rect x="599.5" y="620.1" width="471.5" height="20.5" fill="#0078d7"/><rect x="599.5" y="620.1" width="471.5" height="20.5" fill="none" stroke="#f0a030" stroke-width="1" stroke-dasharray="1 1" opacity="0.8"/><rect x="1071.5" y="616.8" width="25" height="28.599999999999977" fill="#e1e1e1" stroke="#adadad" stroke-width="1"/><path d="M1078 628.45 L1084 634.45 L1090 628.45" fill="none" stroke="#333" stroke-width="1.1"/><rect x="597.5" y="653.8" width="501" height="32.200000000000045" fill="#fff" stroke="#a0a0a0" stroke-width="1"/><rect x="1071.5" y="655.5999999999999" width="25" height="28.900000000000045" fill="#e1e1e1" stroke="#adadad" stroke-width="1"/><path d="M1078 667.4 L1084 673.4 L1090 667.4" fill="none" stroke="#333" stroke-width="1.1"/><rect x="640.5" y="705.5" width="69" height="31" fill="#fff" stroke="#a0a0a0" stroke-width="1"/><rect x="694.7" y="857.7" width="122.5" height="34.5" fill="#e1e1e1" stroke="#adadad" stroke-width="1"/><rect x="834.8" y="857.7" width="122.30000000000007" height="34.5" fill="#e1e1e1" stroke="#adadad" stroke-width="1"/><rect x="974.7" y="857.7" width="122.5" height="34.5" fill="#e1e1e1" stroke="#adadad" stroke-width="1"/><rect x="850.4" y="924.5" width="120.89999999999998" height="32.60000000000002" fill="#e1e1e1" stroke="#0078d7" stroke-width="2"/><rect x="989.4" y="924.0" width="122.60000000000002" height="33.60000000000002" fill="#e1e1e1" stroke="#adadad" stroke-width="1"/></svg>
<div class="t" style="left:481.00px;top:265.32px;font-size:17.5px;color:#000;transform:scaleX(0.9646);">Page Setup</div>
<div class="t" style="left:1014.90px;top:263.70px;font-size:18px;color:#000;transform:scaleX(0.8509);">?</div>
<div class="t" style="left:508.10px;top:315.85px;font-size:15px;color:#000;transform:scaleX(0.9707);">Page</div>
<div class="t" style="left:585.70px;top:317.25px;font-size:15px;color:#000;transform:scaleX(1.0614);">Margins</div>
<div class="t" style="left:675.00px;top:316.95px;font-size:15px;color:#000;transform:scaleX(1.0429);">Header/Footer</div>
<div class="t" style="left:814.80px;top:316.95px;font-size:15px;color:#000;">Sheet</div>
<div class="t" style="left:494.80px;top:358.25px;font-size:15px;color:#000;transform:scaleX(1.0702);">Orientation</div>
<div class="t" style="left:620.80px;top:391.95px;font-size:15px;color:#000;transform:scaleX(1.0811);">Por<u>t</u>rait</div>
<div class="t" style="left:830.70px;top:391.75px;font-size:15px;color:#000;transform:scaleX(0.9956);"><u>L</u>andscape</div>
<div class="t" style="left:494.60px;top:471.65px;font-size:15px;color:#000;transform:scaleX(1.0183);">Scaling</div>
<div class="t" style="left:535.40px;top:507.65px;font-size:15px;color:#000;transform:scaleX(1.0504);"><u>A</u>djust to:</div>
<div class="t" style="left:625.70px;top:505.65px;font-size:15px;color:#000;transform:scaleX(1.0419);">100</div>
<div class="t" style="left:700.80px;top:508.05px;font-size:15px;color:#000;transform:scaleX(1.0287);">% normal size</div>
<div class="t" style="left:535.30px;top:544.85px;font-size:15px;color:#000;transform:scaleX(1.0347);"><u>F</u>it to:</div>
<div class="t" style="left:626.50px;top:542.75px;font-size:15px;color:#8c8c8c;transform:scaleX(0.6366);">1</div>
<div class="t" style="left:720.90px;top:544.35px;font-size:15px;color:#000;transform:scaleX(1.0293);">page(s) wide by</div>
<div class="t" style="left:851.30px;top:542.75px;font-size:15px;color:#8c8c8c;transform:scaleX(0.6366);">1</div>
<div class="t" style="left:945.60px;top:544.25px;font-size:15px;color:#000;transform:scaleX(1.0833);">tall</div>
<div class="t" style="left:495.10px;top:624.25px;font-size:15px;color:#000;transform:scaleX(0.9737);">Paper si<u>z</u>e:</div>
<div class="t" style="left:602.30px;top:624.25px;font-size:15px;color:#fff;transform:scaleX(1.0280);">Letter</div>
<div class="t" style="left:495.10px;top:662.85px;font-size:15px;color:#000;transform:scaleX(1.0536);">Print <u>q</u>uality:</div>
<div class="t" style="left:601.80px;top:662.45px;font-size:15px;color:#000;transform:scaleX(1.0711);">600 dpi</div>
<div class="t" style="left:495.10px;top:713.45px;font-size:15px;color:#000;transform:scaleX(1.0324);">Fi<u>r</u>st page number:</div>
<div class="t" style="left:644.90px;top:711.85px;font-size:15px;color:#000;transform:scaleX(1.0576);">Auto</div>
<div class="t" style="left:734.50px;top:868.55px;font-size:15px;color:#000;transform:scaleX(0.9827);"><u>P</u>rint...</div>
<div class="t" style="left:849.60px;top:868.55px;font-size:15px;color:#000;transform:scaleX(1.0416);">Print Previe<u>w</u></div>
<div class="t" style="left:1003.30px;top:868.55px;font-size:15px;color:#000;transform:scaleX(1.0078);"><u>O</u>ptions...</div>
<div class="t" style="left:899.90px;top:934.25px;font-size:15px;color:#000;transform:scaleX(0.9827);">OK</div>
<div class="t" style="left:1027.30px;top:934.25px;font-size:15px;color:#000;transform:scaleX(0.9866);">Cancel</div>
<svg class="r" style="left:0;top:0" width="1493" height="1020"><path d="M490.2 349.2 H908.4 Q914.9 349.2 914.9 355.7 V444.3 Q914.9 450.8 908.4 450.8 H490.2 Q483.7 450.8 483.7 444.3 V355.7 Q483.7 349.2 490.2 349.2 Z M490.0 354.3 H908.5999999999999 Q909.8 354.3 909.8 355.5 V444.5 Q909.8 445.7 908.5999999999999 445.7 H490.0 Q488.8 445.7 488.8 444.5 V355.5 Q488.8 354.3 490.0 354.3 Z" fill="#000" fill-rule="evenodd"/><path d="M485.8 461 H987.2 Q993.7 461 993.7 467.5 V585.8 Q993.7 592.3 987.2 592.3 H485.8 Q479.3 592.3 479.3 585.8 V467.5 Q479.3 461 485.8 461 Z M485.6 466.1 H987.4 Q988.6 466.1 988.6 467.3 V585.9999999999999 Q988.6 587.1999999999999 987.4 587.1999999999999 H485.6 Q484.40000000000003 587.1999999999999 484.40000000000003 585.9999999999999 V467.3 Q484.40000000000003 466.1 485.6 466.1 Z" fill="#000" fill-rule="evenodd"/><path d="M845.7 913 H974.9 Q981.4 913 981.4 919.5 V963.7 Q981.4 970.2 974.9 970.2 H845.7 Q839.2 970.2 839.2 963.7 V919.5 Q839.2 913 845.7 913 Z M845.7 918.3 H974.9 Q976.1 918.3 976.1 919.5 V963.7 Q976.1 964.9000000000001 974.9 964.9000000000001 H845.7 Q844.5 964.9000000000001 844.5 963.7 V919.5 Q844.5 918.3 845.7 918.3 Z" fill="#000" fill-rule="evenodd"/><rect x="934.4" y="397.9" width="71.60000000000002" height="5.2" fill="#000"/><path d="M914.5 400.5 L939.8 390.5 L935.4 400.5 L939.8 410.5 Z" fill="#000"/><rect x="389.1" y="536.5999999999999" width="68.69999999999999" height="5.4" fill="#000"/><path d="M480.3 539.3 L451.8 529.0999999999999 L456.8 539.3 L451.8 549.5 Z" fill="#000"/><rect x="378.9" y="666.9" width="80.80000000000001" height="5.2" fill="#000"/><path d="M482.7 669.5 L453.7 659.6 L458.7 669.5 L453.7 679.4 Z" fill="#000"/><rect x="1119.5" y="624.85" width="50.5" height="5.3" fill="#000"/><path d="M1096.5 627.5 L1125.0 617.8 L1120.5 627.5 L1125.0 637.2 Z" fill="#000"/><rect x="765.1" y="937.1" width="53.299999999999955" height="4.8" fill="#000"/><path d="M839.5 939.5 L813.0 929.65 L817.4 939.5 L813.0 949.35 Z" fill="#000"/></svg>
<div class="t" style="left:1011.40px;top:386.70px;font-size:30px;color:#000;font-weight:bold;transform:scaleX(1.0329);">Page Orientation</div>
<div class="t" style="left:271.30px;top:519.20px;font-size:30px;color:#000;font-weight:bold;transform:scaleX(0.9855);">Scaling</div>
<div class="t" style="left:192.20px;top:649.40px;font-size:30px;color:#000;font-weight:bold;transform:scaleX(1.0266);">Print Quality</div>
<div class="t" style="left:1175.10px;top:610.00px;font-size:30px;color:#000;font-weight:bold;transform:scaleX(1.0133);">Paper Size Options</div>
<div class="t" style="left:609.10px;top:923.40px;font-size:30px;color:#000;font-weight:bold;transform:scaleX(1.0341);">Ok Button</div>
</body></html>
